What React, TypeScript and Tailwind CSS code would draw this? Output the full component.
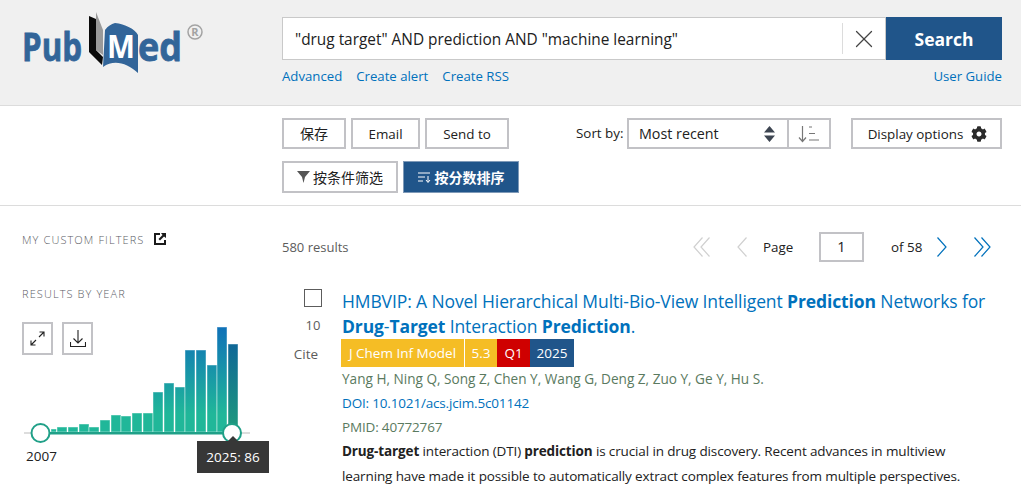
import { X } from "lucide-react";
import { FaCog } from "react-icons/fa";

const font = "font-['Open_Sans','Noto_Sans_CJK_SC',sans-serif]";

// bar positions/heights read off the chart, oldest year first
const bars = [
  { x: 51, h: 3 },
  { x: 57, h: 5 },
  { x: 68, h: 5 },
  { x: 79, h: 8 },
  { x: 89, h: 5 },
  { x: 100, h: 12 },
  { x: 111, h: 17 },
  { x: 121, h: 16 },
  { x: 132, h: 19 },
  { x: 143, h: 19 },
  { x: 153, h: 40 },
  { x: 164, h: 49 },
  { x: 175, h: 45 },
  { x: 185, h: 82 },
  { x: 196, h: 82 },
  { x: 207, h: 67 },
  { x: 217, h: 105 },
  { x: 228, h: 88 },
];

function Logo() {
  return (
    <svg width={190} height={70} viewBox="0 0 190 70" className="shrink-0">
      <text x={0} y={51.5} fontFamily="Open Sans, sans-serif" fontWeight={700} fontSize={40} fill="#326599" stroke="#326599" strokeWidth={0.8} textLength={60} lengthAdjust="spacingAndGlyphs">
        Pub
      </text>
      <path d="M67 7 L74 10 L74 41 L81 48 L80 56 L67 43 Z" fill="#0a0a0a" />
      <path d="M74 3 L81 21 L81 46 L74 41 Z" fill="#9a9a9a" />
      <path d="M81 58 L83 21 C86 17 89 15 93 14 C103 15 113 20 116 26 L116 64 C105 54 92 50 81 58 Z" fill="#326599" />
      <text x={85} y={49} fontFamily="Open Sans, sans-serif" fontWeight={700} fontSize={32} fill="#fff" textLength={28} lengthAdjust="spacingAndGlyphs">
        M
      </text>
      <text x={116} y={51.5} fontFamily="Open Sans, sans-serif" fontWeight={700} fontSize={40} fill="#326599" stroke="#326599" strokeWidth={0.8} textLength={44} lengthAdjust="spacingAndGlyphs">
        ed
      </text>
      <circle cx={173} cy={23} r={7} fill="none" stroke="#a3a3a3" strokeWidth={1.5} />
      <text x={173} y={27} textAnchor="middle" fontFamily="Open Sans, sans-serif" fontWeight={700} fontSize={11} fill="#a3a3a3">
        R
      </text>
    </svg>
  );
}

function Histogram() {
  return (
    <svg width={250} height={130} viewBox="0 0 250 130" className="block">
      <defs>
        <linearGradient id="bar" gradientUnits="userSpaceOnUse" x1={0} y1={5} x2={0} y2={92}>
          <stop offset="0" stopColor="#0f71b8" />
          <stop offset="1" stopColor="#20b799" />
        </linearGradient>
        <linearGradient id="barDark" gradientUnits="userSpaceOnUse" x1={0} y1={22} x2={0} y2={110}>
          <stop offset="0" stopColor="#0f6797" />
          <stop offset="1" stopColor="#1f9c7c" />
        </linearGradient>
      </defs>
      {bars.map((b, i) => (
        <rect
          key={b.x}
          x={b.x}
          y={110 - b.h}
          width={i === 0 ? 5.5 : 10}
          height={b.h}
          fill={i === bars.length - 1 ? "url(#barDark)" : "url(#bar)"}
          stroke="#fff"
          strokeOpacity={0.45}
          strokeWidth={1}
        />
      ))}
      <rect x={24} y={110} width={226} height={2} fill="#dddddd" />
      <rect x={40} y={110} width={192} height={2.5} fill="#20a088" />
      <circle cx={40.5} cy={111} r={9} fill="#fff" stroke="#20a088" strokeWidth={2} />
      <circle cx={232} cy={111} r={9} fill="#fff" stroke="#20a088" strokeWidth={2} />
    </svg>
  );
}

function Chevrons({ double, right, color }: { double?: boolean; right?: boolean; color: string }) {
  const w = double ? 17 : 10;
  return (
    <svg width={w} height={20} viewBox={`0 0 ${w} 20`} fill="none" stroke={color} strokeWidth={1.2} className={right ? "rotate-180" : ""}>
      <path d="M9.5 0.5 L1 10 L9.5 19.5" />
      {double && <path d="M16.5 0.5 L8 10 L16.5 19.5" />}
    </svg>
  );
}

export default function App() {
  return (
    <div className={`${font} w-[1021px] h-[486px] overflow-hidden bg-white text-[14px] text-[#212121]`}>
      <header className="h-[106px] bg-[#f0f0f0] border-b border-[#dcdcdc] flex pl-[22px] pr-[19px]">
        <div className="w-[260px] pt-[9px]">
          <Logo />
        </div>
        <div className="flex-1 pt-[17px]">
          <div className="flex h-[43px]">
            <div className="flex-1 flex items-center bg-white border border-[#c9c9c9] pl-[12px] text-[15.4px]">
              <span className="flex-1 pt-[3px]">"drug target" AND prediction AND "machine learning"</span>
              <span className="w-[43px] h-[31px] border-l border-[#dcdcdc] flex items-center justify-center">
                <X size={30} strokeWidth={1} className="text-[#444]" />
              </span>
            </div>
            <button className="w-[116px] pt-px bg-[#20558a] text-white font-bold text-[17.5px]">Search</button>
          </div>
          <div className="flex gap-[14px] mt-[7px] text-[#0071bc] text-[13.2px] leading-[18px]">
            <span>Advanced</span>
            <span>Create alert</span>
            <span>Create RSS</span>
            <span className="ml-auto">User Guide</span>
          </div>
        </div>
      </header>

      <div className="h-[100px] border-b border-[#dcdcdc] pl-[282px] pr-[19px] pt-[12px]">
        <div className="flex items-center h-[31px] text-[13.4px]">
          <button className="w-[64px] h-[31px] border-2 border-[#b3b3b8]/80 text-[14px]">保存</button>
          <button className="w-[69px] h-[31px] pt-px ml-[5px] border-2 border-[#b3b3b8]/80">Email</button>
          <button className="w-[84px] h-[31px] pt-px ml-[5px] border-2 border-[#b3b3b8]/80">Send to</button>
          <span className="ml-[67px] w-[51px] whitespace-nowrap">Sort by:</span>
          <div className="w-[162px] h-[31px] border-2 border-[#b3b3b8]/80 flex items-center pl-[10px] justify-between pr-[12px] text-[14.3px]">
            <span>Most recent</span>
            <svg width={11} height={16} viewBox="0 0 11 16">
              <path d="M5.5 0 L11 6.5 L0 6.5 Z M5.5 16 L11 9.5 L0 9.5 Z" fill="#3d4551" />
            </svg>
          </div>
          <div className="w-[42px] h-[31px] border-2 border-l-0 border-[#b3b3b8]/80 flex items-center justify-center">
            <svg width={22} height={18} viewBox="0 0 22 18" fill="none" stroke="#777" strokeWidth={1.2}>
              <path d="M4.5 1 V16 M1 12.5 L4.5 16.5 L8 12.5" />
              <path d="M11 2 H14 M11 8.5 H17 M11 15 H21" />
            </svg>
          </div>
          <button className="ml-[20px] w-[151px] h-[31px] pt-px pl-[2px] border-2 border-[#b3b3b8]/80 flex items-center justify-center gap-[8px]">
            Display options
            <FaCog size={16} className="text-[#2b2b2b]" />
          </button>
        </div>
        <div className="flex gap-[5px] mt-[12px] text-[14px]">
          <button className="w-[116px] h-[32px] border-2 border-[#b3b3b8]/80 flex items-center justify-center gap-[3px]">
            <svg width={13} height={12} viewBox="0 0 13 12">
              <path d="M0 0 H13 L8 6 L6.5 12 L5 6 Z" fill="#555" />
            </svg>
            按条件筛选
          </button>
          <button className="w-[116px] h-[32px] bg-[#20558a] border border-[#7f9ab8] text-white font-bold flex items-center justify-center gap-[4px]">
            <svg width={13} height={11} viewBox="0 0 13 11" fill="none" stroke="#fff" strokeWidth={1}>
              <path d="M0 1 H12 M0 5 H7 M0 9 H5 M10 4 V10 M8 8 L10 10.5 L12 8" />
            </svg>
            按分数排序
          </button>
        </div>
      </div>

      <div className="flex">
        <aside className="w-[282px] shrink-0 pl-[22px] relative">
          <div className="flex items-center mt-[26px] h-[16px] text-[11px] font-light tracking-[0.1em] text-[#5c6066]">
            MY CUSTOM FILTERS
            <svg width={12} height={12} viewBox="0 0 12 12" className="ml-[10px] -mt-[2px]">
              <path d="M0 0 H6 V2 H2 V10 H10 V7 H12 V12 H0 Z M7 0 H12 V5 L10 3.5 L6 7.5 L4.5 6 L8.5 2 Z" fill="#1b1b1b" />
            </svg>
          </div>
          <div className="mt-[38px] h-[16px] text-[11px] font-light tracking-[0.1em] text-[#5c6066]">RESULTS BY YEAR</div>
          <div className="flex gap-[9px] mt-[20px] relative z-10">
            <div className="w-[31px] h-[33px] border-2 border-[#b3b3b8]/80 flex items-center justify-center">
              <svg width={15} height={15} viewBox="0 0 15 15" fill="none" stroke="#222" strokeWidth={1.1}>
                <path d="M1 14 L6 9 M1 9.5 V14 H5.5 M14 1 L9 6 M9.5 1 H14 V5.5" />
              </svg>
            </div>
            <div className="w-[31px] h-[33px] border-2 border-[#b3b3b8]/80 flex items-center justify-center">
              <svg width={16} height={18} viewBox="0 0 16 18" fill="none" stroke="#222" strokeWidth={1.1}>
                <path d="M8 0 V13 M3.5 8.5 L8 13 L12.5 8.5 M0.5 12 V16.5 H15.5 V12" />
              </svg>
            </div>
          </div>
          <div className="absolute left-0 top-[116px]">
            <Histogram />
          </div>
          <div className="absolute left-[26px] top-[240px] text-[13.5px] leading-[20px]">2007</div>
          <div className="absolute left-[197px] top-[235px] w-[72px] h-[32px] bg-[#373737] text-white text-[13.5px] flex items-center justify-center">
            2025: 86
            <span className="absolute -top-[5px] left-[31px] w-0 h-0 border-x-[5px] border-x-transparent border-b-[5px] border-b-[#373737]" />
          </div>
        </aside>

        <main className="flex-1 min-w-0 pr-[19px]">
          <div className="flex items-center h-[30px] mt-[26px] text-[13.4px]">
            <span className="text-[#5c5c5c] text-[13px] pt-px">580 results</span>
            <span className="ml-auto"><Chevrons double color="#d0d0d0" /></span>
            <span className="ml-[27px]"><Chevrons color="#d0d0d0" /></span>
            <span className="ml-[16px] w-[30px]">Page</span>
            <div className="w-[45px] h-[30px] ml-[26px] border-2 border-[#b3b3b8]/80 flex items-center justify-center text-[14.5px]">1</div>
            <span className="ml-[27px] w-[32px]">of 58</span>
            <span className="ml-[14px]"><Chevrons right color="#0071bc" /></span>
            <span className="ml-[27px] mr-[11px]"><Chevrons double right color="#0071bc" /></span>
          </div>

          <article className="flex mt-[26px]">
            <div className="w-[60px] shrink-0 flex flex-col items-center">
              <span className="w-[18px] h-[18px] ml-[2px] mt-[1px] border border-[#5c5c5c]" />
              <span className="mt-[9px] ml-[2px] text-[13px] text-[#5c5c5c] leading-[18px]">10</span>
              <span className="mt-[10px] -ml-[12px] text-[13.5px] text-[#5c5c5c] leading-[20px]">Cite</span>
            </div>
            <div className="flex-1 min-w-0 mt-px">
              <h2 className="text-[17.5px] tracking-[-0.11px] leading-[25px] text-[#0071bc] whitespace-nowrap">
                HMBVIP: A Novel Hierarchical Multi-Bio-View Intelligent <b>Prediction</b> Networks for
                <br />
                <b>Drug</b>-<b>Target</b> Interaction <b>Prediction</b>.
              </h2>
              <div className="flex h-[28px] -ml-[1px] text-white text-[13.5px] leading-[28px]">
                <span className="w-[123px] bg-[#f5bd25] text-center">J Chem Inf Model</span>
                <span className="w-[32px] ml-px bg-[#f5bd25] text-center">5.3</span>
                <span className="w-[33px] bg-[#cf0000] text-center">Q1</span>
                <span className="w-[44px] bg-[#20558a] text-center">2025</span>
              </div>
              <p className="text-[13.6px] leading-[24px] text-[#5a7a60]">Yang H, Ning Q, Song Z, Chen Y, Wang G, Deng Z, Zuo Y, Ge Y, Hu S.</p>
              <p className="text-[13.5px] tracking-[-0.17px] leading-[24px] text-[#0071bc]">DOI: 10.1021/acs.jcim.5c01142</p>
              <p className="text-[13.5px] tracking-[-0.17px] leading-[24px] text-[#5a7a60]">PMID: 40772767</p>
              <p className="text-[13.5px] tracking-[-0.13px] leading-[25px] whitespace-nowrap">
                <b>Drug-target</b> interaction (DTI) <b>prediction</b> is crucial in drug discovery. Recent advances in multiview
                <br />
                learning have made it possible to automatically extract complex features from multiple perspectives.
              </p>
            </div>
          </article>
        </main>
      </div>
    </div>
  );
}
